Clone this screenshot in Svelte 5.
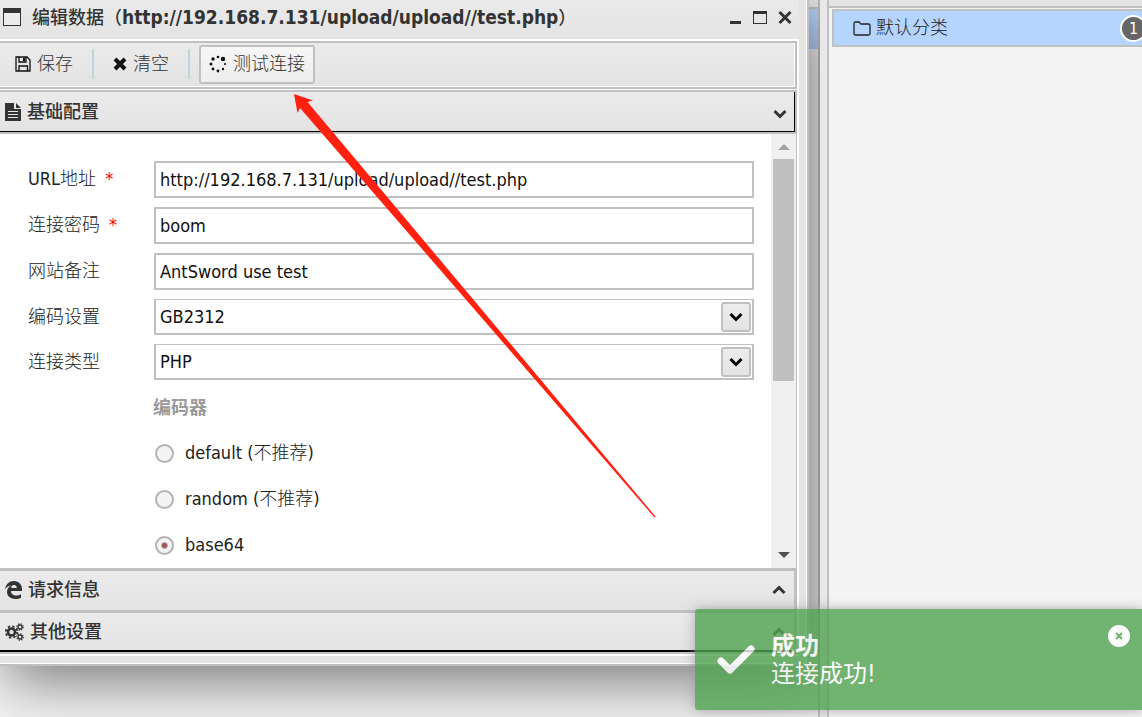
<script>
  let url = $state('http://192.168.7.131/upload/upload//test.php');
  let password = $state('boom');
  let note = $state('AntSword use test');
  let encoding = $state('GB2312');
  let type = $state('PHP');
  let encoder = $state('base64');

  const encoders = [
    { value: 'default', name: 'default', hint: '不推荐' },
    { value: 'random', name: 'random', hint: '不推荐' },
    { value: 'base64', name: 'base64', hint: '' }
  ];

  const dots = [
    [9, 2, 1.3], [14, 4, 2.2], [16, 9, 1.1], [14, 14, 1.2],
    [9, 16, 1.4], [4, 14, 1.4], [2, 9, 1.5], [4, 4, 1.7]
  ];
</script>

{#snippet chevron(up)}
  <svg class="chevron" width="14" height="10" viewBox="0 0 14 10" aria-hidden="true">
    <path d={up ? 'M1.5 8 7 2.5 12.500 8' : 'M1.500 2 7 7.500 12.500 2'} fill="none" stroke="currentColor" stroke-width="3" />
  </svg>
{/snippet}

{#snippet field(id, label, required)}
  <label for={id}>{label}{#if required}<span class="star">*</span>{/if}</label>
{/snippet}

<div class="app">
  <main class="desk">
    <div class="behind" aria-hidden="true"><div class="strip"></div><div class="picked"></div></div>
    <section class="window">
      <header class="titlebar">
        <svg width="18" height="18" viewBox="0 0 18 18" aria-hidden="true">
          <path d="M0 0h18v18H0z" fill="#333" /><path d="M1 5h16v12H1z" fill="#ececec" />
        </svg>
        <h1>编辑数据（<b>http://192.168.7.131/upload/upload//test.php</b>）</h1>
        <button class="wbtn" aria-label="最小化">
          <svg width="12" height="16" viewBox="0 0 12 16"><path d="M0 12h11v3H0z" fill="#333" /></svg>
        </button>
        <button class="wbtn" aria-label="最大化">
          <svg width="14" height="16" viewBox="0 0 14 16"><path d="M0 2h14v13H0zM1 5v9h12V5z" fill="#333" fill-rule="evenodd" /></svg>
        </button>
        <button class="wbtn" aria-label="关闭">
          <svg width="14" height="16" viewBox="0 0 14 16"><path d="m1.500 3 11 11m0-11-11 11" stroke="#333" stroke-width="3" /></svg>
        </button>
      </header>

      <div class="frame">
        <div class="toolbar">
          <button class="tool">
            <svg width="16" height="16" viewBox="0 0 16 16" fill="none" stroke="#111" stroke-width="1.300">
              <path d="M1 1h11l3 3v11H1z" /><path d="M4 1v5h7V1M4 15v-5h8.500v5" /><path d="M8 2h2v3H8z" fill="#111" stroke="none" />
            </svg>
            保存
          </button>
          <span class="sep"></span>
          <button class="tool">
            <svg width="14" height="14" viewBox="0 0 14 14"><path d="m2 2 10 10m0-10L2 12" stroke="#111" stroke-width="4" /></svg>
            清空
          </button>
          <span class="sep"></span>
          <button class="tool raised">
            <svg width="18" height="18" viewBox="0 0 18 18" fill="#111">
              {#each dots as [cx, cy, r]}<circle {cx} {cy} {r} />{/each}
            </svg>
            测试连接
          </button>
        </div>

        <button class="head open" aria-expanded="true">
          <svg width="16" height="18" viewBox="0 0 16 18" aria-hidden="true">
            <path d="M0 0h9v6h7v12H0zM11 0l5 5h-5z" fill="#333" />
            <path d="M3 8.500h10M3 11.500h10M3 14.500h10" stroke="#e8e8e8" stroke-width="1.200" />
          </svg>
          <span>基础配置</span>
          {@render chevron(false)}
        </button>

        <div class="body">
          <form class="form" onsubmit={(e) => e.preventDefault()}>
            <div class="row">{@render field('url', 'URL地址', true)}<input id="url" type="text" bind:value={url} /></div>
            <div class="row">{@render field('pwd', '连接密码', true)}<input id="pwd" type="text" bind:value={password} /></div>
            <div class="row">{@render field('note', '网站备注', false)}<input id="note" type="text" bind:value={note} /></div>
            <div class="row">
              {@render field('enc', '编码设置', false)}
              <div class="combo">
                <select id="enc" bind:value={encoding}><option>GB2312</option><option>UTF8</option></select>
                <span class="drop">{@render chevron(false)}</span>
              </div>
            </div>
            <div class="row">
              {@render field('type', '连接类型', false)}
              <div class="combo">
                <select id="type" bind:value={type}><option>PHP</option><option>ASP</option></select>
                <span class="drop">{@render chevron(false)}</span>
              </div>
            </div>
            <fieldset>
              <legend>编码器</legend>
              {#each encoders as item}
                <label class="choice">
                  <input type="radio" name="encoder" value={item.value} bind:group={encoder} />
                  <span>{item.name}{#if item.hint}&nbsp;({item.hint}){/if}</span>
                </label>
              {/each}
            </fieldset>
          </form>
          <div class="scroll" aria-hidden="true">
            <svg width="12" height="6" viewBox="0 0 12 6"><path d="M0 6 6 0l6 6z" fill="#a3a3a3" /></svg>
            <div class="track"><div class="thumb"></div></div>
            <svg width="12" height="6" viewBox="0 0 12 6"><path d="m0 0 6 6 6-6z" fill="#505050" /></svg>
          </div>
        </div>

        <button class="head" aria-expanded="false">
          <svg width="17" height="18" viewBox="0 0 17 18" aria-hidden="true">
            <path d="M0 8C1 3 4 0 9 0c5 0 8 4 8 8v2H6c0 3 2.500 4.500 5 4.500 2 0 3.500-.5 5-1.300v3.500C14.500 17.500 12.500 18 10.500 18 5.500 18 2 15 2 11c0-3 1.500-5.500 4.500-6.800C4 4.500 1.500 6 0 8zm6.200-1h5.600c0-2-1-3-2.800-3S6.400 5.200 6.200 7z" fill="#333" fill-rule="evenodd" />
          </svg>
          <span>请求信息</span>
          {@render chevron(true)}
        </button>
        <button class="head last" aria-expanded="false">
          <svg width="19" height="18" viewBox="0 0 19 18" fill="none" stroke="#333" aria-hidden="true">
            <circle cx="6.500" cy="9" r="3.500" stroke-width="2.600" />
            <circle cx="6.500" cy="9" r="5.700" stroke-width="1.800" stroke-dasharray="2.400 2.077" />
            <circle cx="15" cy="4" r="2" stroke-width="1.400" />
            <circle cx="15" cy="4" r="3.200" stroke-width="1.200" stroke-dasharray="1.300 1.213" />
            <circle cx="15" cy="14" r="2" stroke-width="1.400" />
            <circle cx="15" cy="14" r="3.200" stroke-width="1.200" stroke-dasharray="1.300 1.213" />
          </svg>
          <span>其他设置</span>
          {@render chevron(true)}
        </button>
      </div>
    </section>
  </main>

  <div class="splitter"></div>

  <aside class="side">
    <div class="sidehead"></div>
    <button class="category">
      <svg width="18" height="15" viewBox="0 0 18 15" fill="none" stroke="#222" stroke-width="1.300" aria-hidden="true">
        <path d="M1 2.500Q1 1 2.500 1h3.300Q7 1 7 2.200 7 3 8.200 3h7.300Q17 3 17 4.500v8q0 1.500-1.500 1.500h-13Q1 14 1 12.500z" />
      </svg>
      <span>默认分类</span>
      <span class="badge">1</span>
    </button>
  </aside>

  <div class="toast" role="alert">
    <svg width="38" height="30" viewBox="0 0 38 30" aria-hidden="true">
      <path d="m4 16 9 9L34 4" fill="none" stroke="#fff" stroke-width="7" stroke-linecap="round" stroke-linejoin="round" />
    </svg>
    <div class="message"><strong>成功</strong><span>连接成功!</span></div>
    <button class="dismiss" aria-label="关闭通知">
      <svg width="22" height="22" viewBox="0 0 22 22"><circle cx="11" cy="11" r="11" fill="#fff" /><path d="m8 8 6 6m0-6-6 6" stroke="#51a351" stroke-width="2" /></svg>
    </button>
  </div>

  <svg class="pointer" width="364" height="426" viewBox="0 0 364 426" aria-hidden="true">
    <path d="M1 1 20 7.500l-5.500 1.500L362.500 423.500l-1 1L7 15l-2.500 5z" fill="#ff2010" />
  </svg>
</div>

<style>
  :global(body) {
    margin: 0;
    background: #f4f4f4;
  }
  .app {
    position: relative;
    display: grid;
    grid-template-columns: minmax(0, 820fr) 9px minmax(0, 313fr);
    min-height: 100vh;
    overflow: hidden;
    font-family: 'DejaVu Sans Condensed', 'Noto Sans', 'Noto Sans CJK SC', sans-serif;
    font-size: 18px;
    line-height: 24px;
    color: #222;
  }
  .app * {
    box-sizing: border-box;
  }
  button,
  input,
  select {
    font: inherit;
    color: inherit;
    margin: 0;
  }
  button {
    border: 0;
    padding: 0;
    background: none;
    text-align: left;
  }
  svg {
    display: block;
    flex: none;
  }
  .desk {
    position: relative;
    overflow: hidden;
    padding-right: 11px;
  }
  .behind {
    position: absolute;
    inset: 0;
    border-right: 2px solid #c0c0c0;
  }
  .strip {
    height: 9px;
    background: #e8e8e8;
    border-bottom: 2px solid #c0c0c0;
  }
  .picked {
    height: 40px;
    background: #b5d5ff;
  }
  .window {
    position: relative;
    background: #e4e4e4;
    border: solid #c0c0c0;
    border-width: 0 2px 2px 0;
    padding: 0 8px 8px 0;
    box-shadow: 6px 14px 58px rgba(0, 0, 0, 0.53), inset -1px -1px #fff;
  }
  .titlebar {
    display: flex;
    align-items: center;
    gap: 11px;
    height: 39px;
    padding: 0 7px 5px 3px;
    background: linear-gradient(#eaeaea, #e4e4e4);
    color: #333;
  }
  h1 {
    flex: 1;
    margin: 0;
    font-size: 18px;
    font-weight: 500;
    white-space: nowrap;
  }
  h1 b {
    font-size: 19px;
  }
  .frame {
    border: solid #fff;
    border-width: 2px 2px 2px 0;
    background: #fff;
  }
  .toolbar {
    display: flex;
    align-items: center;
    height: 48px;
    padding: 0 0 2px 5px;
    border: solid #c0c0c0;
    border-width: 2px 2px 2px 0;
    box-shadow: inset -1px -1px #fff;
    background: linear-gradient(#ebebeb, #e3e3e3);
  }
  .tool {
    display: flex;
    align-items: center;
    gap: 6px;
    height: 39px;
    padding: 0 10px;
    font-weight: 300;
    color: #333;
  }
  .raised {
    border: 2px solid #c0c0c0;
    border-radius: 3px;
    padding: 0 8px;
    background: linear-gradient(#f7f7f7, #ededed);
  }
  .sep {
    width: 2px;
    height: 30px;
    margin: 0 9px;
    background: #c3d5dc;
  }
  .head {
    display: flex;
    align-items: center;
    gap: 6px;
    width: 100%;
    height: 42px;
    padding: 0 8px 2px 5px;
    border: solid #c0c0c0;
    border-width: 3px 3px 0 0;
    background: linear-gradient(#ebebeb, #e3e3e3);
    font-weight: 500;
    color: #333;
  }
  .head span {
    flex: 1;
  }
  .open {
    height: 44px;
    margin-top: 1px;
    padding-bottom: 0;
    border-width: 2px 2px 2px 0;
    box-shadow: inset -1px -1px #000;
  }
  .open .chevron {
    margin-top: 3px;
  }
  .last {
    height: 44px;
    border-bottom-width: 2px;
    box-shadow: inset 0 -2px #000;
  }
  .body {
    display: flex;
    border-right: 1px solid #c0c0c0;
    background: #fff;
  }
  .form {
    display: flex;
    flex-direction: column;
    flex: 1;
    gap: 9px;
    padding: 27px 17px 0 28px;
  }
  .row {
    display: flex;
    align-items: center;
  }
  .row label {
    width: 126px;
    padding-bottom: 1px;
    font-weight: 300;
    color: #222;
  }
  .star {
    margin-left: 9px;
    color: #f00;
  }
  .row input,
  select {
    flex: 1;
    min-width: 0;
    height: 37px;
    padding: 0 4px;
    border: 2px solid #c0c0c0;
    border-radius: 0;
    background: #fff;
    color: #111;
  }
  .combo {
    display: flex;
    flex: 1;
    position: relative;
  }
  select {
    appearance: none;
    height: 36px;
    padding-top: 1px;
    border-top-width: 1px;
  }
  .drop {
    position: absolute;
    top: 3px;
    right: 3px;
    display: grid;
    place-items: center;
    width: 30px;
    height: 30px;
    border: 2px solid #c0c0c0;
    border-radius: 3px;
    background: linear-gradient(#ededed, #e3e3e3);
    color: #000;
    pointer-events: none;
  }
  fieldset {
    display: flex;
    flex-direction: column;
    margin: 0;
    padding: 0 0 0 125px;
    border: 0;
  }
  legend {
    padding: 0;
    height: 41px;
    line-height: 38px;
    font-weight: 600;
    color: #999;
  }
  .choice {
    display: flex;
    align-items: center;
    gap: 11px;
    height: 46px;
    padding: 0 2px;
    font-weight: 300;
  }
  .choice input {
    appearance: none;
    width: 19px;
    height: 19px;
    border: 2px solid #b9b1b1;
    border-radius: 50%;
    background: #f3f4f4;
  }
  .choice input:checked {
    background: radial-gradient(circle, #9c5a58 0 2px, #f3f4f6 4px);
  }
  .scroll {
    display: flex;
    flex-direction: column;
    align-items: center;
    width: 25px;
    padding: 10px 0;
    background: #f0f0f0;
  }
  .track {
    flex: 1;
    width: 21px;
    padding: 9px 0;
  }
  .thumb {
    height: 222px;
    background: #c0c0c0;
  }
  .splitter {
    background: #e8e8e8;
    border-right: 2px solid #c0c0c0;
  }
  .side {
    background: #f4f4f4;
  }
  .sidehead {
    height: 8px;
    border-bottom: 2px solid #c0c0c0;
    background: #e5e5e5;
  }
  .category {
    display: flex;
    align-items: center;
    gap: 5px;
    width: calc(100% - 3px);
    height: 38px;
    margin: 1px 0 0 3px;
    padding-left: 19px;
    border: 2px solid #c0c0c0;
    border-right: 0;
    background: #b5d5ff;
    font-weight: 300;
    overflow: hidden;
  }
  .badge {
    display: grid;
    place-items: center;
    width: 27px;
    height: 27px;
    margin: 0 -5px 0 auto;
    border: 2px solid #fff;
    border-radius: 50%;
    background: #666;
    font-size: 16px;
    font-weight: 400;
    color: #fff;
  }
  .toast {
    position: absolute;
    right: 0;
    bottom: 7px;
    display: flex;
    align-items: center;
    gap: 16px;
    width: 447px;
    height: 101px;
    padding: 0 12px 0 22px;
    border-radius: 3px 0 0 3px;
    background: #51a351;
    box-shadow: 0 0 12px #999;
    opacity: 0.8;
    color: #fff;
  }
  .message {
    display: flex;
    flex: 1;
    flex-direction: column;
    font-size: 24px;
    line-height: 28px;
  }
  .dismiss {
    align-self: flex-start;
    margin-top: 16px;
  }
  .pointer {
    position: absolute;
    top: 93px;
    left: 293px;
    pointer-events: none;
  }
</style>
